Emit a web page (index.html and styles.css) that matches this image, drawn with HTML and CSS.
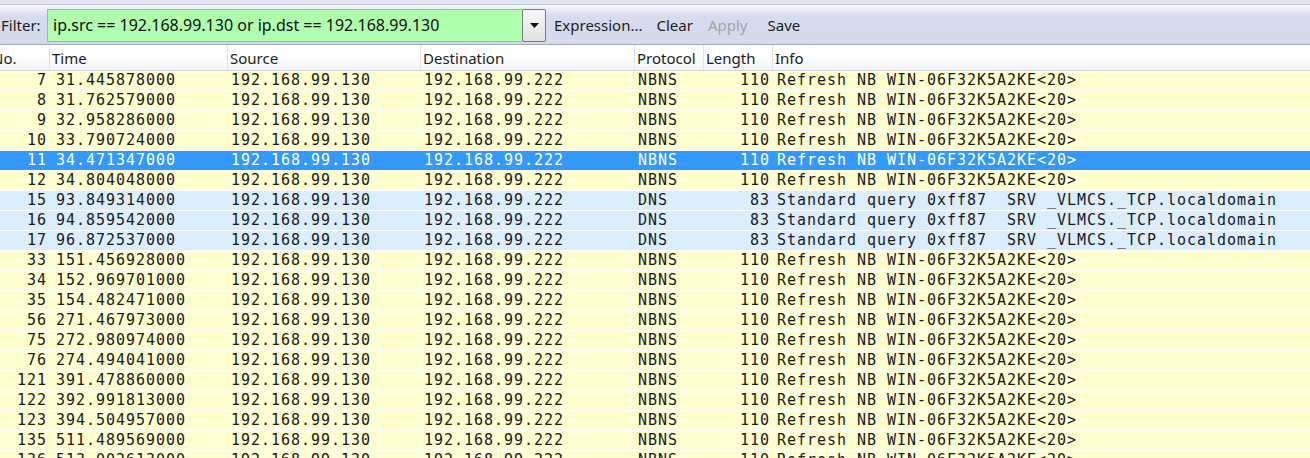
FILE: index.html
```html
<!DOCTYPE html>
<html>
<head>
<meta charset="utf-8">
<link rel="stylesheet" href="styles.css">
</head>
<body>
<div class="app">
  <div class="topstrip"></div>
  <div class="toolbar">
    <span class="flabel">Filter:</span>
    <div class="combo">
      <div class="finput">ip.src == 192.168.99.130 or ip.dst == 192.168.99.130</div>
      <div class="fdrop"><svg width="9" height="5" viewBox="0 0 9 5"><path d="M0 0H9L4.5 5Z" fill="#111"/></svg></div>
    </div>
    <span class="tbtn">Expression...</span>
    <span class="tbtn clear">Clear</span>
    <span class="tbtn disabled">Apply</span>
    <span class="tbtn">Save</span>
  </div>
  <div class="thead">
    <div class="hc c-no">No.</div>
    <div class="hc">Time</div>
    <div class="hc">Source</div>
    <div class="hc">Destination</div>
    <div class="hc">Protocol</div>
    <div class="hc">Length</div>
    <div class="hc last">Info</div>
  </div>
  <div class="tbody">
    <div class="row nb"><span class="num">7</span><span class="tm">31.445878000</span><span class="src">192.168.99.130</span><span class="dst">192.168.99.222</span><span class="pr">NBNS</span><span class="len">110</span><span class="info">Refresh NB WIN-06F32K5A2KE&lt;20&gt;</span></div>
    <div class="row nb"><span class="num">8</span><span class="tm">31.762579000</span><span class="src">192.168.99.130</span><span class="dst">192.168.99.222</span><span class="pr">NBNS</span><span class="len">110</span><span class="info">Refresh NB WIN-06F32K5A2KE&lt;20&gt;</span></div>
    <div class="row nb"><span class="num">9</span><span class="tm">32.958286000</span><span class="src">192.168.99.130</span><span class="dst">192.168.99.222</span><span class="pr">NBNS</span><span class="len">110</span><span class="info">Refresh NB WIN-06F32K5A2KE&lt;20&gt;</span></div>
    <div class="row nb"><span class="num">10</span><span class="tm">33.790724000</span><span class="src">192.168.99.130</span><span class="dst">192.168.99.222</span><span class="pr">NBNS</span><span class="len">110</span><span class="info">Refresh NB WIN-06F32K5A2KE&lt;20&gt;</span></div>
    <div class="row sel"><span class="num">11</span><span class="tm">34.471347000</span><span class="src">192.168.99.130</span><span class="dst">192.168.99.222</span><span class="pr">NBNS</span><span class="len">110</span><span class="info">Refresh NB WIN-06F32K5A2KE&lt;20&gt;</span></div>
    <div class="row nb"><span class="num">12</span><span class="tm">34.804048000</span><span class="src">192.168.99.130</span><span class="dst">192.168.99.222</span><span class="pr">NBNS</span><span class="len">110</span><span class="info">Refresh NB WIN-06F32K5A2KE&lt;20&gt;</span></div>
    <div class="row dns"><span class="num">15</span><span class="tm">93.849314000</span><span class="src">192.168.99.130</span><span class="dst">192.168.99.222</span><span class="pr">DNS</span><span class="len">83</span><span class="info">Standard query 0xff87  SRV _VLMCS._TCP.localdomain</span></div>
    <div class="row dns"><span class="num">16</span><span class="tm">94.859542000</span><span class="src">192.168.99.130</span><span class="dst">192.168.99.222</span><span class="pr">DNS</span><span class="len">83</span><span class="info">Standard query 0xff87  SRV _VLMCS._TCP.localdomain</span></div>
    <div class="row dns"><span class="num">17</span><span class="tm">96.872537000</span><span class="src">192.168.99.130</span><span class="dst">192.168.99.222</span><span class="pr">DNS</span><span class="len">83</span><span class="info">Standard query 0xff87  SRV _VLMCS._TCP.localdomain</span></div>
    <div class="row nb"><span class="num">33</span><span class="tm">151.456928000</span><span class="src">192.168.99.130</span><span class="dst">192.168.99.222</span><span class="pr">NBNS</span><span class="len">110</span><span class="info">Refresh NB WIN-06F32K5A2KE&lt;20&gt;</span></div>
    <div class="row nb"><span class="num">34</span><span class="tm">152.969701000</span><span class="src">192.168.99.130</span><span class="dst">192.168.99.222</span><span class="pr">NBNS</span><span class="len">110</span><span class="info">Refresh NB WIN-06F32K5A2KE&lt;20&gt;</span></div>
    <div class="row nb"><span class="num">35</span><span class="tm">154.482471000</span><span class="src">192.168.99.130</span><span class="dst">192.168.99.222</span><span class="pr">NBNS</span><span class="len">110</span><span class="info">Refresh NB WIN-06F32K5A2KE&lt;20&gt;</span></div>
    <div class="row nb"><span class="num">56</span><span class="tm">271.467973000</span><span class="src">192.168.99.130</span><span class="dst">192.168.99.222</span><span class="pr">NBNS</span><span class="len">110</span><span class="info">Refresh NB WIN-06F32K5A2KE&lt;20&gt;</span></div>
    <div class="row nb"><span class="num">75</span><span class="tm">272.980974000</span><span class="src">192.168.99.130</span><span class="dst">192.168.99.222</span><span class="pr">NBNS</span><span class="len">110</span><span class="info">Refresh NB WIN-06F32K5A2KE&lt;20&gt;</span></div>
    <div class="row nb"><span class="num">76</span><span class="tm">274.494041000</span><span class="src">192.168.99.130</span><span class="dst">192.168.99.222</span><span class="pr">NBNS</span><span class="len">110</span><span class="info">Refresh NB WIN-06F32K5A2KE&lt;20&gt;</span></div>
    <div class="row nb"><span class="num">121</span><span class="tm">391.478860000</span><span class="src">192.168.99.130</span><span class="dst">192.168.99.222</span><span class="pr">NBNS</span><span class="len">110</span><span class="info">Refresh NB WIN-06F32K5A2KE&lt;20&gt;</span></div>
    <div class="row nb"><span class="num">122</span><span class="tm">392.991813000</span><span class="src">192.168.99.130</span><span class="dst">192.168.99.222</span><span class="pr">NBNS</span><span class="len">110</span><span class="info">Refresh NB WIN-06F32K5A2KE&lt;20&gt;</span></div>
    <div class="row nb"><span class="num">123</span><span class="tm">394.504957000</span><span class="src">192.168.99.130</span><span class="dst">192.168.99.222</span><span class="pr">NBNS</span><span class="len">110</span><span class="info">Refresh NB WIN-06F32K5A2KE&lt;20&gt;</span></div>
    <div class="row nb"><span class="num">135</span><span class="tm">511.489569000</span><span class="src">192.168.99.130</span><span class="dst">192.168.99.222</span><span class="pr">NBNS</span><span class="len">110</span><span class="info">Refresh NB WIN-06F32K5A2KE&lt;20&gt;</span></div>
    <div class="row nb"><span class="num">136</span><span class="tm">513.002613000</span><span class="src">192.168.99.130</span><span class="dst">192.168.99.222</span><span class="pr">NBNS</span><span class="len">110</span><span class="info">Refresh NB WIN-06F32K5A2KE&lt;20&gt;</span></div>
  </div>
</div>
</body>
</html>
```

FILE: styles.css
```css
html, body {
  margin: 0;
  padding: 0;
  background: #ffffff;
}
.app {
  width: 1310px;
  height: 458px;
  overflow: hidden;
  font-family: "Noto Sans", "Liberation Sans", sans-serif;
}
.topstrip {
  height: 4px;
  background: #e2e6f2;
  border-bottom: 1px solid #c6cbdc;
}
.toolbar {
  display: flex;
  align-items: center;
  background: linear-gradient(to bottom, #f6f7fb 0px, #e6e9f4 6px, #d6dcee 12px, #d4daec 100%);
  border-bottom: 1px solid #a4aabb;
  box-sizing: border-box;
  height: 40px;
  padding-top: 1px;
}
.flabel {
  font-size: 15px;
  color: #1c1c1c;
  margin-left: 1px;
  width: 46px;
}
.combo {
  display: flex;
  height: 33px;
}
.finput {
  width: 475px;
  background: #afffaf;
  border: 1px solid #a8b0b8;
  border-right: none;
  box-sizing: border-box;
  font-size: 16px;
  color: #111;
  padding-left: 5px;
  display: flex;
  align-items: center;
  white-space: nowrap;
  overflow: hidden;
}
.fdrop {
  width: 24px;
  box-sizing: border-box;
  border: 1px solid #7a7a7a;
  border-radius: 2px;
  background: linear-gradient(to bottom, #f8f8f8, #e2e2e2);
  display: flex;
  align-items: center;
  justify-content: center;
}
.tbtn {
  font-size: 15px;
  color: #1c1c1c;
  margin-right: 14px;
}
.combo + .tbtn {
  margin-left: 8px;
}
.tbtn.clear {
  margin-right: 15px;
}
.tbtn.disabled {
  color: #a3a3a8;
  margin-right: 20px;
}
.thead {
  display: grid;
  grid-template-columns: 50px 178px 193px 214px 69px 69px 1fr;
  height: 26px;
  background: linear-gradient(to bottom, #ffffff 0%, #ffffff 45%, #f1f2f5 100%);
  border-bottom: 1px solid #d5d6da;
  box-sizing: border-box;
  font-size: 15px;
  color: #1c1c1c;
}
.hc {
  border-right: 1px solid #e2e3e7;
  padding-left: 2px;
  display: flex;
  align-items: center;
  white-space: nowrap;
  overflow: hidden;
}
.hc.c-no {
  padding-left: 0;
  text-indent: -8px;
}
.hc.last {
  border-right: none;
}
.tbody {
  font-family: "DejaVu Sans Mono", "Liberation Mono", monospace;
  font-size: 15px;
  letter-spacing: 0.97px;
  color: #1a1a1a;
}
.row {
  display: grid;
  grid-template-columns: 50px 178px 193px 214px 69px 69px 1fr;
  height: 19px;
  line-height: 19px;
  border-bottom: 1px solid #ffffff;
  white-space: pre;
}
.row span {
  overflow: hidden;
}
.row.nb { background: #ffffd0; }
.row.dns { background: #daeeff; }
.row.sel { background: #3399ff; color: #ffffff; }
.num { text-align: right; padding-right: 3px; }
.tm { padding-left: 6px; }
.src { padding-left: 3px; }
.dst { padding-left: 3px; }
.pr { padding-left: 3px; }
.len { text-align: right; padding-right: 3px; }
.info { padding-left: 4px; }
```
